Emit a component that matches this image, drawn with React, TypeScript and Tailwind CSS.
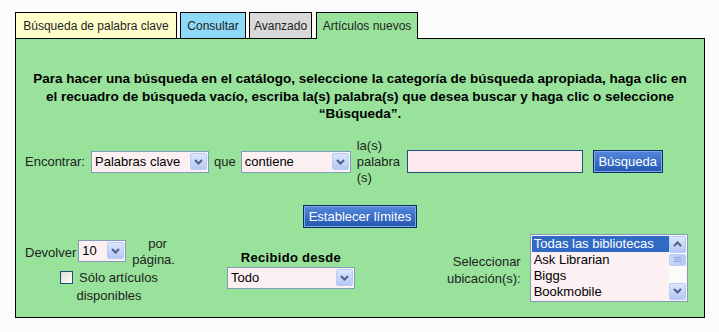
import React from "react";

const font = { fontFamily: '"Liberation Sans", Arial, sans-serif' };

function Chevron() {
  return (
    <svg width="9" height="6" viewBox="0 0 9 6">
      <path d="M1 1 L4.5 4.5 L8 1" fill="none" stroke="#4d6185" strokeWidth="2" />
    </svg>
  );
}

function ArrowBox({ up = false }: { up?: boolean }) {
  return (
    <span className="flex h-[17px] w-[17px] shrink-0 items-center justify-center rounded-[2px] border border-[#b9cdf8] bg-gradient-to-b from-[#dbe6fe] to-[#b4c8f4]">
      <span className={up ? "rotate-180 flex" : "flex"}>
        <Chevron />
      </span>
    </span>
  );
}

function FakeSelect({ value, className }: { value: string; className: string }) {
  return (
    <div className={"flex h-[22px] items-center border border-[#7f9db9] bg-[#fdf0f3] pr-px " + className}>
      <span className="flex-1 truncate pl-[3px] text-[13px] leading-[16px] text-black">{value}</span>
      <ArrowBox />
    </div>
  );
}

function BlueButton({ label, className = "" }: { label: string; className?: string }) {
  return (
    <button
      className={
        "h-[23px] border border-[#0b2d63] bg-gradient-to-b from-[#5588dd] to-[#2456b2] px-[3px] text-[13px] leading-[19px] text-white shadow-[inset_0_0_0_1px_#7fa6e6] " +
        className
      }
    >
      {label}
    </button>
  );
}

const tabs = [
  { label: "Búsqueda de palabra clave", bg: "bg-[#ffffcc]", w: "w-[162px]" },
  { label: "Consultar", bg: "bg-[#8fd9f8]", w: "w-[66px]" },
  { label: "Avanzado", bg: "bg-[#d9d9d9]", w: "w-[63px]" },
];

const locations = ["Todas las bibliotecas", "Ask Librarian", "Biggs", "Bookmobile"];

export default function App() {
  return (
    <div className="min-h-screen w-[719px] bg-[#fcfcfc] pt-[12px]" style={font}>
      <div className="ml-[15px] w-[690px]">
        <div className="flex items-end gap-[3px]">
          {tabs.map((t) => (
            <div
              key={t.label}
              className={`${t.bg} ${t.w} flex h-[26px] items-center justify-center border border-b-0 border-black text-[12px] text-[#222]`}
            >
              {t.label}
            </div>
          ))}
          <div className="relative z-10 -mb-px ml-px flex h-[27px] w-[102px] items-center justify-center border border-b-0 border-black bg-[#98e29b] pb-px text-[12px] text-[#222]">
            Artículos nuevos
          </div>
        </div>

        <div className="h-[280px] border border-black bg-[#98e29b] text-[13px] leading-[16px] text-black">
          <p className="pt-[31px] text-center text-[13.5px] font-bold leading-[17.5px]">
            Para hacer una búsqueda en el catálogo, seleccione la categoría de búsqueda apropiada, haga clic en
            <br />
            el recuadro de búsqueda vacío, escriba la(s) palabra(s) que desea buscar y haga clic o seleccione
            <br />
            “Búsqueda”.
          </p>

          <div className="mt-[15px] flex items-center pl-[9px]">
            <span className="text-[#222]">Encontrar:</span>
            <FakeSelect value="Palabras clave" className="ml-[6px] w-[118px]" />
            <span className="ml-[5px] text-[#222]">que</span>
            <FakeSelect value="contiene" className="ml-[5px] w-[110px]" />
            <span className="ml-[6px] w-[40px] text-[#222]">
              la(s)
              <br />
              palabra
              <br />
              (s)
            </span>
            <input className="ml-[10px] h-[23px] w-[176px] border border-[#1c4f7c] bg-[#fbe9ee] outline-none" />
            <BlueButton label="Búsqueda" className="ml-[10px] w-[70px]" />
          </div>

          <div className="mt-[19px] flex justify-center">
            <BlueButton label="Establecer límites" className="w-[114px]" />
          </div>

          <div className="mt-[6px] flex items-start pl-[9px]">
            <div className="w-[170px]">
              <div className="flex items-start">
                <span className="mt-[11px] text-[#222]">Devolver</span>
                <FakeSelect value="10" className="ml-[2px] mt-[6px] w-[48px]" />
                <span className="ml-[6px] mt-[2px] text-right text-[#222]">
                  <span className="mr-[8px]">por</span>
                  <br />
                  página.
                </span>
              </div>
              <div className="ml-[34px] mt-[1px] w-[100px] text-center leading-[18px] text-[#222]">
                <span className="relative top-[2px] mr-[6px] inline-block h-[13px] w-[13px] border border-[#1c4f7c] bg-gradient-to-br from-[#dcdcd6] to-white" />
                Sólo artículos disponibles
              </div>
            </div>

            <div className="ml-[32px] mt-[16px] flex w-[128px] flex-col items-center">
              <span className="font-bold tracking-[0.3px]">Recibido desde</span>
              <FakeSelect value="Todo" className="mt-[1px] w-[128px]" />
            </div>

            <div className="ml-[92px] mt-[19px] text-right text-[#222] leading-[17px]">
              Seleccionar
              <br />
              ubicación(s):
            </div>

            <div className="ml-[9px] flex h-[68px] w-[158px] border border-[#7f9db9] bg-[#fdf0f3] p-px">
              <div className="flex-1">
                {locations.map((l, i) => (
                  <div
                    key={l}
                    className={
                      "h-[16px] pl-[2px] text-[13px] leading-[16px] " +
                      (i === 0 ? "bg-[#316ac5] text-white" : "text-black")
                    }
                  >
                    {l}
                  </div>
                ))}
              </div>
              <div className="flex w-[17px] flex-col bg-[#fbfbf9]">
                <ArrowBox up />
                <span className="mt-px flex h-[12px] w-[17px] flex-col items-center justify-center gap-[1px] rounded-[2px] border border-[#b9cdf8] bg-gradient-to-r from-[#c9d8fc] to-[#b4c8f4]">
                  <span className="h-px w-[7px] bg-[#8ea6d8]" />
                  <span className="h-px w-[7px] bg-[#8ea6d8]" />
                  <span className="h-px w-[7px] bg-[#8ea6d8]" />
                </span>
                <span className="flex-1" />
                <ArrowBox />
              </div>
            </div>
          </div>
        </div>
      </div>
    </div>
  );
}
